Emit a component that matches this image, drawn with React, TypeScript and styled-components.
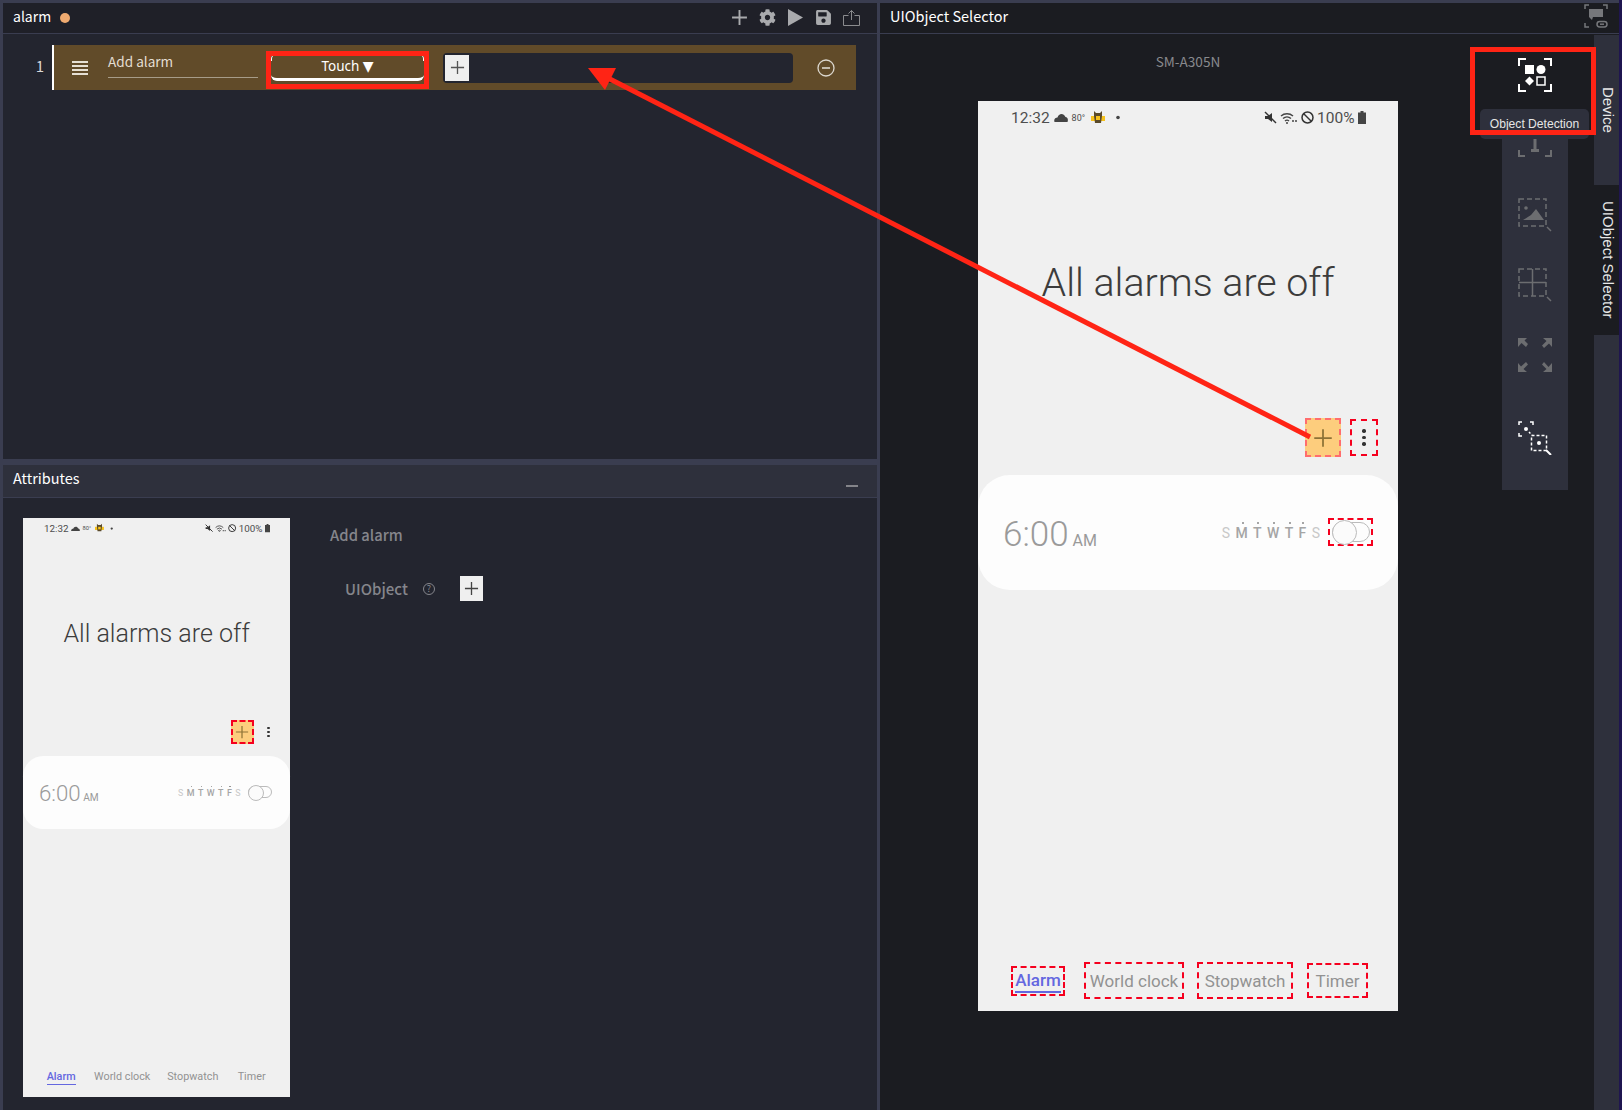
import React from "react";
import styled, { createGlobalStyle } from "styled-components";
import { FaCog, FaSave } from "react-icons/fa";

const Global = createGlobalStyle`
  html, body { margin: 0; padding: 0; background: #3a3d50; }
  * { box-sizing: border-box; }
`;

const UI_FONT = `"Noto Sans CJK KR", "Noto Sans", sans-serif`;
const u = (n: number) => `calc(var(--s) * ${n}px)`;

const Page = styled.div`
  position: relative;
  width: 1622px;
  height: 1110px;
  overflow: hidden;
  padding: 3px 3px 0 3px;
  background: #3a3d50;
  display: grid;
  grid-template-columns: 874px 739px;
  column-gap: 3px;
  font-family: ${UI_FONT};
  border-right: 3px solid #1f1550;
`;
const LeftColumn = styled.section`
  display: flex;
  flex-direction: column;
  min-height: 0;
`;
const PanelHead = styled.header<{ $tone: "sheet" | "device" | "attr" }>`
  flex: none;
  height: ${(p) => (p.$tone === "attr" ? "33px" : "31px")};
  display: flex;
  align-items: center;
  justify-content: space-between;
  padding: 0 10px;
  color: #fff;
  font-size: 14.5px;
  background: ${(p) => (p.$tone === "sheet" ? "#1f2028" : p.$tone === "device" ? "#1b1c21" : "#2e303c")};
  border-bottom: 1px solid #3a3d50;
`;
const TitleGroup = styled.div`
  display: flex;
  align-items: center;
  gap: 9px;
  line-height: 26px;
  margin-top: -5px;
`;
const AttrTitle = styled(TitleGroup)`
  margin-top: -7px;
`;
const SheetTitle = styled.span`
  font-size: 14px;
`;
const ModifiedDot = styled.span`
  width: 10px;
  height: 10px;
  border-radius: 50%;
  background: #efaa70;
  margin-top: 5px;
`;
const ToolIcons = styled.div`
  display: flex;
  align-items: center;
  gap: 11px;
  color: #a9aaad;
  margin-right: 7px;
  margin-top: -1px;
`;
const CollapseMark = styled.svg`
  margin: 6px 9px 0 0;
`;
const LinkStatus = styled.svg`
  margin: -5px 1px 0 0;
`;
const SheetBody = styled.div`
  flex: none;
  height: 425px;
  background: #23252f;
  padding-top: 11px;
  margin-bottom: 6px;
`;
const StepLine = styled.div`
  display: flex;
  align-items: stretch;
  height: 45px;
`;
const StepIndex = styled.div`
  width: 49px;
  text-align: right;
  padding-right: 8px;
  color: #d8d8d8;
  font-size: 15px;
  line-height: 42px;
`;
const StepBar = styled.div`
  width: 804px;
  display: flex;
  align-items: center;
  background: #614b29;
  border-left: 2px solid #fff;
  padding-left: 18px;
`;
const Burger = styled.div`
  width: 16px;
  height: 14px;
  margin-top: 1px;
  background: repeating-linear-gradient(to bottom, #e6e0d4 0 2px, transparent 2px 4px);
`;
const StepName = styled.div`
  align-self: flex-start;
  width: 150px;
  height: 33px;
  margin-left: 20px;
  border-bottom: 1px solid #a79c88;
  color: #e4ded2;
  font-size: 13.6px;
  line-height: 32px;
`;
const TouchButton = styled.div`
  position: relative;
  width: 153px;
  height: 27px;
  margin-left: 13px;
  margin-top: -1px;
  border-bottom: 3px solid #fff;
  border-radius: 6px;
  color: #fff;
  font-family: "Noto Sans", sans-serif;
  font-size: 13.5px;
  line-height: 25px;
  text-align: center;
  &::before, &::after {
    content: "";
    position: absolute;
    top: 0;
    width: 6px;
    height: 6px;
    border-top: 1px solid #fff;
  }
  &::before { left: 0; border-left: 1px solid #fff; border-top-left-radius: 5px; }
  &::after { right: 0; border-right: 1px solid #fff; border-top-right-radius: 5px; }
`;
const Caret = styled.span`
  font-family: "DejaVu Sans", sans-serif;
  font-size: 14px;
`;
const ObjectField = styled.div`
  width: 350px;
  height: 30px;
  margin-left: 19px;
  background: #23252f;
  border-radius: 4px;
  display: flex;
  align-items: center;
  padding-left: 2px;
`;
const AddSquare = styled.div<{ $w: number; $h: number }>`
  width: ${(p) => p.$w}px;
  height: ${(p) => p.$h}px;
  background: #efefef;
  display: flex;
  align-items: center;
  justify-content: center;
`;
const RemoveSlot = styled.div`
  margin-left: 24px;
  display: flex;
`;
const AttrBody = styled.div`
  flex: 1;
  min-height: 0;
  background: #23252f;
  padding: 20px 0 0 20px;
  display: flex;
`;
const AttrForm = styled.div`
  margin-left: 40px;
  display: flex;
  flex-direction: column;
  color: #85868c;
  font-weight: 500;
`;
const AttrName = styled.div`
  font-size: 14.8px;
  line-height: 20px;
  margin-top: 7px;
`;
const AttrRow = styled.div`
  display: flex;
  align-items: center;
  margin: 31px 0 0 15px;
  font-size: 15px;
`;
const HelpMark = styled.span`
  width: 12px;
  height: 12px;
  margin-left: 15px;
  margin-right: 25px;
  border: 1px solid #85868c;
  border-radius: 50%;
  font-size: 9px;
  font-weight: 400;
  line-height: 10px;
  text-align: center;
`;
const RightColumn = styled.section`
  display: flex;
  flex-direction: column;
  min-height: 0;
  background: #1b1c21;
`;
const DeviceMain = styled.div`
  flex: 1;
  min-height: 0;
  display: flex;
`;
const Canvas = styled.div`
  position: relative;
  width: 714px;
  padding-left: 98px;
  display: flex;
  flex-direction: column;
`;
const DeviceLabel = styled.div`
  width: 420px;
  height: 67px;
  padding-top: 17px;
  text-align: center;
  color: #88898d;
  font-size: 13.6px;
  line-height: 20px;
`;
const SideTabs = styled.div`
  width: 25px;
  background: #2e303c;
  display: flex;
  flex-direction: column;
  margin-top: 1px;
`;
const SideTab = styled.div<{ $on?: boolean }>`
  height: 150px;
  padding-left: 3px;
  writing-mode: vertical-rl;
  display: flex;
  align-items: center;
  justify-content: center;
  color: #e8e8e8;
  font-family: "Liberation Sans", sans-serif;
  font-size: 15px;
  background: ${(p) => (p.$on ? "#1b1c21" : "transparent")};
`;
const ToolRail = styled.div`
  position: absolute;
  top: 10px;
  right: 26px;
  width: 66px;
  height: 446px;
  display: flex;
  flex-direction: column;
  align-items: center;
  background: #2e303c;
`;
const ToolActive = styled.div`
  width: 66px;
  height: 70px;
  background: #1b1c21;
  padding-top: 14px;
  display: flex;
  justify-content: center;
`;
const ToolSlot = styled.div<{ $h: number; $top: number }>`
  height: ${(p) => p.$h}px;
  padding-top: ${(p) => p.$top}px;
  display: flex;
  align-items: flex-start;
  justify-content: center;
`;
const Tooltip = styled.div`
  position: absolute;
  top: 75px;
  right: 5px;
  width: 109px;
  height: 30px;
  border-radius: 5px;
  background: #2e303c;
  color: #e6e6e6;
  font-family: "Liberation Sans", sans-serif;
  font-size: 12.1px;
  line-height: 30px;
  text-align: center;
  z-index: 2;
`;

/* phone mock, scaled through --s */
const Phone = styled.div<{ $s: number }>`
  --s: ${(p) => p.$s};
  flex: none;
  width: ${u(420)};
  height: ${u(910)};
  background: #f0f0f0;
  display: flex;
  flex-direction: column;
  font-family: Roboto, sans-serif;
  color: #4e4e4e;
`;
const StatusBar = styled.div`
  height: ${u(34)};
  padding: 0 ${u(32)} ${u(1)} ${u(33)};
  display: flex;
  align-items: center;
  justify-content: space-between;
  font-size: ${u(15.5)};
`;
const StatusSide = styled.div`
  display: flex;
  align-items: center;
  gap: ${u(4)};
`;
const StatusRight = styled(StatusSide)`
  gap: ${u(3.4)};
`;
const Temp = styled.span`
  font-size: ${u(9)};
  margin: 0 ${u(2)} 0 0;
`;
const StatusGlyph = styled.svg<{ $w: number; $h: number }>`
  width: ${(p) => u(p.$w)};
  height: ${(p) => u(p.$h)};
  flex: none;
`;
const Headline = styled.div`
  margin-top: ${u(125)};
  text-align: center;
  font-size: ${u(39.4)};
  line-height: ${u(46)};
  font-weight: 300;
  color: #3c3c3c;
`;
const ActionRow = styled.div`
  margin-top: ${u(112)};
  padding-right: ${u(20)};
  display: flex;
  justify-content: flex-end;
  align-items: center;
  height: ${u(39)};
`;
const Detect = styled.div<{ $mark?: boolean; $fill?: boolean }>`
  display: flex;
  align-items: center;
  justify-content: center;
  border: 2px dashed ${(p) => (p.$mark ? "#f5001e" : "transparent")};
  background: ${(p) => (p.$fill ? "#fdcd7d" : "transparent")};
`;
const AddAlarm = styled(Detect)`
  width: ${u(36)};
  height: ${u(39)};
  border-color: ${(p) => (p.$mark ? "#f5001e" : "#ff6d6d")};
`;
const MoreBox = styled(Detect)`
  width: ${u(28)};
  height: ${u(37)};
  margin-left: ${u(9)};
  flex-direction: column;
  gap: ${u(3)};
`;
const MoreDot = styled.i`
  width: ${u(3.4)};
  height: ${u(3.4)};
  border-radius: 50%;
  background: #333;
`;
const AlarmCard = styled.div`
  margin-top: ${u(18)};
  height: ${u(115)};
  border-radius: ${u(32)};
  background: #fdfdfd;
  display: flex;
  align-items: center;
  padding: 0 ${u(25)};
`;
const Time = styled.div`
  color: #9a9a9a;
  font-size: ${u(35)};
  font-weight: 300;
  line-height: 1;
  margin-top: ${u(3)};
`;
const Meridiem = styled.span`
  font-size: ${u(16)};
  font-weight: 400;
  margin-left: ${u(4)};
`;
const Days = styled.div`
  margin-left: auto;
  display: flex;
  gap: ${u(5.4)};
  margin-top: ${u(1)};
`;
const Day = styled.span<{ $on?: boolean }>`
  position: relative;
  font-size: ${u(14)};
  font-weight: ${(p) => (p.$on ? 500 : 400)};
  color: ${(p) => (p.$on ? "#a5a5a5" : "#c8c8c8")};
  &::before {
    content: "";
    display: ${(p) => (p.$on ? "block" : "none")};
    position: absolute;
    top: ${u(-3)};
    left: 50%;
    width: ${u(2)};
    height: ${u(2)};
    border-radius: 50%;
    background: #888;
  }
`;
const ToggleBox = styled(Detect)`
  width: ${u(45)};
  height: ${u(28)};
  margin-left: ${u(8)};
  margin-top: ${u(-1)};
  justify-content: flex-end;
`;
const Toggle = styled.div`
  position: relative;
  width: ${u(38)};
  height: ${u(20)};
  margin-right: ${u(1)};
  border: ${u(1.6)} solid #bbb;
  border-radius: ${u(10)};
  &::before {
    content: "";
    position: absolute;
    left: ${u(-1.5)};
    top: ${u(-3)};
    width: ${u(23)};
    height: ${u(23)};
    border: ${u(1.6)} solid #bbb;
    border-radius: 50%;
    background: #fbfbfb;
  }
`;
const TabBar = styled.div`
  margin-top: auto;
  padding: 0 0 ${u(12)} ${u(33)};
  display: flex;
  align-items: center;
`;
const TabBox = styled(Detect)<{ $w: number; $h: number; $gap: number }>`
  width: ${(p) => u(p.$w)};
  height: ${(p) => u(p.$h)};
  margin-left: ${(p) => u(p.$gap)};
  flex: none;
`;
const TabLabel = styled.span<{ $on?: boolean }>`
  font-size: ${u(17)};
  line-height: ${u(22)};
  white-space: nowrap;
  color: ${(p) => (p.$on ? "#6467e0" : "#929292")};
  font-weight: ${(p) => (p.$on ? 500 : 400)};
  border-bottom: ${(p) => (p.$on ? u(2) : "0")} solid #6467e0;
`;

/* annotation overlay */
const ArrowLayer = styled.svg`
  position: absolute;
  inset: 0;
  width: 1622px;
  height: 1110px;
  pointer-events: none;
  z-index: 5;
`;
const RedFrame = styled.div<{ $x: number; $y: number; $w: number; $h: number }>`
  position: absolute;
  left: ${(p) => p.$x}px;
  top: ${(p) => p.$y}px;
  width: ${(p) => p.$w}px;
  height: ${(p) => p.$h}px;
  border: 5px solid #ff2415;
  z-index: 6;
  pointer-events: none;
`;

const PlusGlyph = ({ size, color, w = 1.4 }: { size: number; color: string; w?: number }) => (
  <svg width={size} height={size} viewBox="0 0 16 16">
    <path d="M8 1v14M1 8h14" stroke={color} strokeWidth={w} fill="none" />
  </svg>
);

const OBJECT_ICON = (
  <svg width="34" height="34" viewBox="0 0 34 34" fill="none">
    <path d="M1 8V1h7M26 1h7v7M33 26v7h-7M8 33H1v-7" stroke="#fff" strokeWidth="2" />
    <rect x="7" y="7" width="9" height="9" fill="#fff" />
    <circle cx="23" cy="11.5" r="4.5" fill="#fff" />
    <path d="M11.5 18.5l4.5 4.5-4.5 4.5-4.5-4.500z" fill="#fff" />
    <rect x="19" y="19" width="8" height="8" stroke="#fff" strokeWidth="1.5" />
  </svg>
);
const Gray = "#6c6d70";
const TEXT_TOOL = (
  <svg width="34" height="24" viewBox="0 0 34 24" fill="none">
    <path d="M1 17v6h6M27 23h6v-6" stroke={Gray} strokeWidth="2" />
    <path d="M17 0v17M13 17.500h8" stroke={Gray} strokeWidth="3" />
  </svg>
);
const IMAGE_TOOL = (
  <svg width="34" height="34" viewBox="0 0 34 34" fill="none">
    <rect x="1" y="1" width="27" height="27" stroke={Gray} strokeWidth="1.500" strokeDasharray="5 3" />
    <circle cx="8" cy="10" r="1.800" fill={Gray} />
    <path d="M5 22l8-5 5-6 8 11z" fill={Gray} />
    <path d="M29 29l4 4" stroke={Gray} strokeWidth="1.500" />
  </svg>
);
const TABLE_TOOL = (
  <svg width="34" height="34" viewBox="0 0 34 34" fill="none">
    <rect x="1" y="1" width="27" height="27" stroke={Gray} strokeWidth="1.500" strokeDasharray="5 3" />
    <path d="M14.500 1v27M1 14.500h27" stroke={Gray} strokeWidth="1.500" />
    <path d="M29 29l4 4" stroke={Gray} strokeWidth="1.500" />
  </svg>
);
const ARROW_TOOL = (
  <svg width="34" height="34" viewBox="0 0 34 34" fill={Gray}>
    <path d="M0 0h9L6.500 2.500 10 6 8 9 3.500 5 0 9z" />
    <path d="M34 0v9l-3-3.500L26 10l-2-2.500L28.500 3 25 0z" />
    <path d="M0 34v-9l3 3.500L8 24l2 2.500L5.500 31 9 34z" />
    <path d="M34 34h-9l3.500-3L24 26.500 26 24l4.500 5 3.500-4z" />
  </svg>
);
const SELECT_TOOL = (
  <svg width="34" height="34" viewBox="0 0 34 34" fill="none" stroke="#fff" strokeWidth="1.500">
    <path d="M1 4V1h3M12 1h3v3M1 12v3h3" />
    <circle cx="8" cy="8" r="2" fill="#fff" stroke="none" />
    <path d="M11 11l3 3" strokeDasharray="2 2" />
    <rect x="13.500" y="14.500" width="15" height="15" strokeDasharray="3 2" />
    <circle cx="21" cy="22" r="2" fill="#fff" stroke="none" />
    <path d="M28 29l5 5" strokeWidth="2" />
  </svg>
);

const Owl = () => (
  <StatusGlyph $w={14} $h={16} viewBox="0 0 14 16">
    <rect x="0" y="6" width="14" height="5" fill="#f6c21c" />
    <path d="M3 1l2 2h4l2-2v5l-1 7H4L3 6z" fill="#5a4a2a" />
    <rect x="5" y="6" width="4" height="4" fill="#f6c21c" />
  </StatusGlyph>
);

const PhoneMock = ({ scale, full }: { scale: number; full?: boolean }) => (
  <Phone $s={scale}>
    <StatusBar>
      <StatusSide>
        12:32
        <StatusGlyph $w={14} $h={9} viewBox="0 0 14 9">
          <path d="M0.500 9c-1-3 1-4.500 3-4.500 1-4 6-5 8-.5 2 0 3 2.500 2 5z" fill="#444" />
        </StatusGlyph>
        <Temp>80°</Temp>
        <Owl />
        <StatusGlyph $w={14} $h={5} viewBox="0 0 14 5">
          <circle cx="9" cy="2.500" r="1.800" fill="#444" />
        </StatusGlyph>
      </StatusSide>
      <StatusRight>
        <StatusGlyph $w={13} $h={13} viewBox="0 0 13 13">
          <path d="M1 1l11 11" stroke="#333" strokeWidth="1.500" />
          <path d="M1 5h3l4-3v9L4 8H1z" fill="#333" />
        </StatusGlyph>
        <StatusGlyph $w={17} $h={12} viewBox="0 0 17 12" fill="none" stroke="#444" strokeWidth="1.400">
          <path d="M1 4a9 9 0 0 1 12 0M3 6.500a6 6 0 0 1 8 0M5 9a3 3 0 0 1 4 0" />
          <circle cx="7" cy="11" r="1" fill="#444" stroke="none" />
          <circle cx="13" cy="9" r="1" fill="#444" stroke="none" />
          <circle cx="16" cy="9" r="1" fill="#444" stroke="none" />
        </StatusGlyph>
        <StatusGlyph $w={13} $h={13} viewBox="0 0 13 13" fill="none" stroke="#333" strokeWidth="1.500">
          <circle cx="6.500" cy="6.500" r="5.500" />
          <path d="M2.500 2.500l8 8" />
        </StatusGlyph>
        100%
        <StatusGlyph $w={8} $h={13} viewBox="0 0 8 13">
          <path d="M2.500 0h3v1.500H8V13H0V1.500h2.500z" fill="#444" />
        </StatusGlyph>
      </StatusRight>
    </StatusBar>
    <Headline>All alarms are off</Headline>
    <ActionRow>
      <AddAlarm $mark={!full} $fill>
        <PlusGlyph size={full ? 20 : 14} color="#8d7236" />
      </AddAlarm>
      <MoreBox $mark={full}>
        <MoreDot />
        <MoreDot />
        <MoreDot />
      </MoreBox>
    </ActionRow>
    <AlarmCard>
      <Time>
        6:00
        <Meridiem>AM</Meridiem>
      </Time>
      <Days>
        <Day>S</Day>
        <Day $on>M</Day>
        <Day $on>T</Day>
        <Day $on>W</Day>
        <Day $on>T</Day>
        <Day $on>F</Day>
        <Day>S</Day>
      </Days>
      <ToggleBox $mark={full}>
        <Toggle />
      </ToggleBox>
    </AlarmCard>
    <TabBar>
      <TabBox $mark={full} $w={54} $h={30} $gap={0}>
        <TabLabel $on>Alarm</TabLabel>
      </TabBox>
      <TabBox $mark={full} $w={100} $h={37} $gap={19}>
        <TabLabel>World clock</TabLabel>
      </TabBox>
      <TabBox $mark={full} $w={96} $h={37} $gap={13}>
        <TabLabel>Stopwatch</TabLabel>
      </TabBox>
      <TabBox $mark={full} $w={61} $h={35} $gap={14}>
        <TabLabel>Timer</TabLabel>
      </TabBox>
    </TabBar>
  </Phone>
);

export default function App() {
  return (
    <Page>
      <Global />
      <LeftColumn>
        <PanelHead $tone="sheet">
          <TitleGroup>
            <SheetTitle>alarm</SheetTitle>
            <ModifiedDot />
          </TitleGroup>
          <ToolIcons>
            <PlusGlyph size={17} color="#a9aaad" w={1.8} />
            <FaCog size={17} />
            <svg width="17" height="17" viewBox="0 0 17 17">
              <path d="M1 0l15 8.500-15 8.500z" fill="#a9aaad" />
            </svg>
            <FaSave size={17} />
            <svg width="17" height="17" viewBox="0 0 17 17" fill="none" stroke="#8a8b8e" strokeWidth="1">
              <path d="M5.500 6.500h-5v10h16v-10h-5M8.500 11V1.500M5.500 4.500l3-3 3 3" />
            </svg>
          </ToolIcons>
        </PanelHead>
        <SheetBody>
          <StepLine>
            <StepIndex>1</StepIndex>
            <StepBar>
              <Burger />
              <StepName>Add alarm</StepName>
              <TouchButton>
                Touch <Caret>▼</Caret>
              </TouchButton>
              <ObjectField>
                <AddSquare $w={24} $h={26}>
                  <PlusGlyph size={15} color="#555" />
                </AddSquare>
              </ObjectField>
              <RemoveSlot>
                <svg width="18" height="18" viewBox="0 0 18 18" fill="none" stroke="#dcd8cf" strokeWidth="1.300">
                  <circle cx="9" cy="9" r="8" />
                  <path d="M5 9h8" strokeWidth="1.600" />
                </svg>
              </RemoveSlot>
            </StepBar>
          </StepLine>
        </SheetBody>
        <PanelHead $tone="attr">
          <AttrTitle>Attributes</AttrTitle>
          <CollapseMark width="12" height="12" viewBox="0 0 12 12">
            <path d="M0 8h12" stroke="#a9aaad" strokeWidth="1.400" />
          </CollapseMark>
        </PanelHead>
        <AttrBody>
          <PhoneMock scale={0.636} />
          <AttrForm>
            <AttrName>Add alarm</AttrName>
            <AttrRow>
              UIObject
              <HelpMark>?</HelpMark>
              <AddSquare $w={23} $h={25}>
                <PlusGlyph size={15} color="#444" />
              </AddSquare>
            </AttrRow>
          </AttrForm>
        </AttrBody>
      </LeftColumn>
      <RightColumn>
        <PanelHead $tone="device">
          <TitleGroup>UIObject Selector</TitleGroup>
          <LinkStatus width="24" height="24" viewBox="0 0 24 24" fill="none" stroke="#76777b" strokeWidth="1.500">
            <path d="M1 5V1h4M19 1h4v4M1 19v4h4" />
            <path d="M5 5h14v8H9l-1 3-3-3z" fill="#76777b" stroke="none" />
            <rect x="13" y="17.500" width="10" height="5.500" rx="2.700" />
            <path d="M16 20.200h4" />
          </LinkStatus>
        </PanelHead>
        <DeviceMain>
          <Canvas>
            <DeviceLabel>SM-A305N</DeviceLabel>
            <PhoneMock scale={1} full />
            <ToolRail>
              <ToolActive>{OBJECT_ICON}</ToolActive>
              <ToolSlot $h={57} $top={19}>{TEXT_TOOL}</ToolSlot>
              <ToolSlot $h={70} $top={27}>{IMAGE_TOOL}</ToolSlot>
              <ToolSlot $h={70} $top={27}>{TABLE_TOOL}</ToolSlot>
              <ToolSlot $h={83} $top={27}>{ARROW_TOOL}</ToolSlot>
              <ToolSlot $h={96} $top={27}>{SELECT_TOOL}</ToolSlot>
            </ToolRail>
            <Tooltip>Object Detection</Tooltip>
          </Canvas>
          <SideTabs>
            <SideTab>Device</SideTab>
            <SideTab $on>UIObject Selector</SideTab>
          </SideTabs>
        </DeviceMain>
      </RightColumn>
      <RedFrame $x={266} $y={51} $w={163} $h={38} />
      <RedFrame $x={1470} $y={47} $w={126} $h={88} />
      <ArrowLayer viewBox="0 0 1622 1110">
        <path d="M1310 437L604 76" stroke="#ff2415" strokeWidth="5" />
        <path d="M588 68h28l-11 22z" fill="#ff2415" />
      </ArrowLayer>
    </Page>
  );
}
